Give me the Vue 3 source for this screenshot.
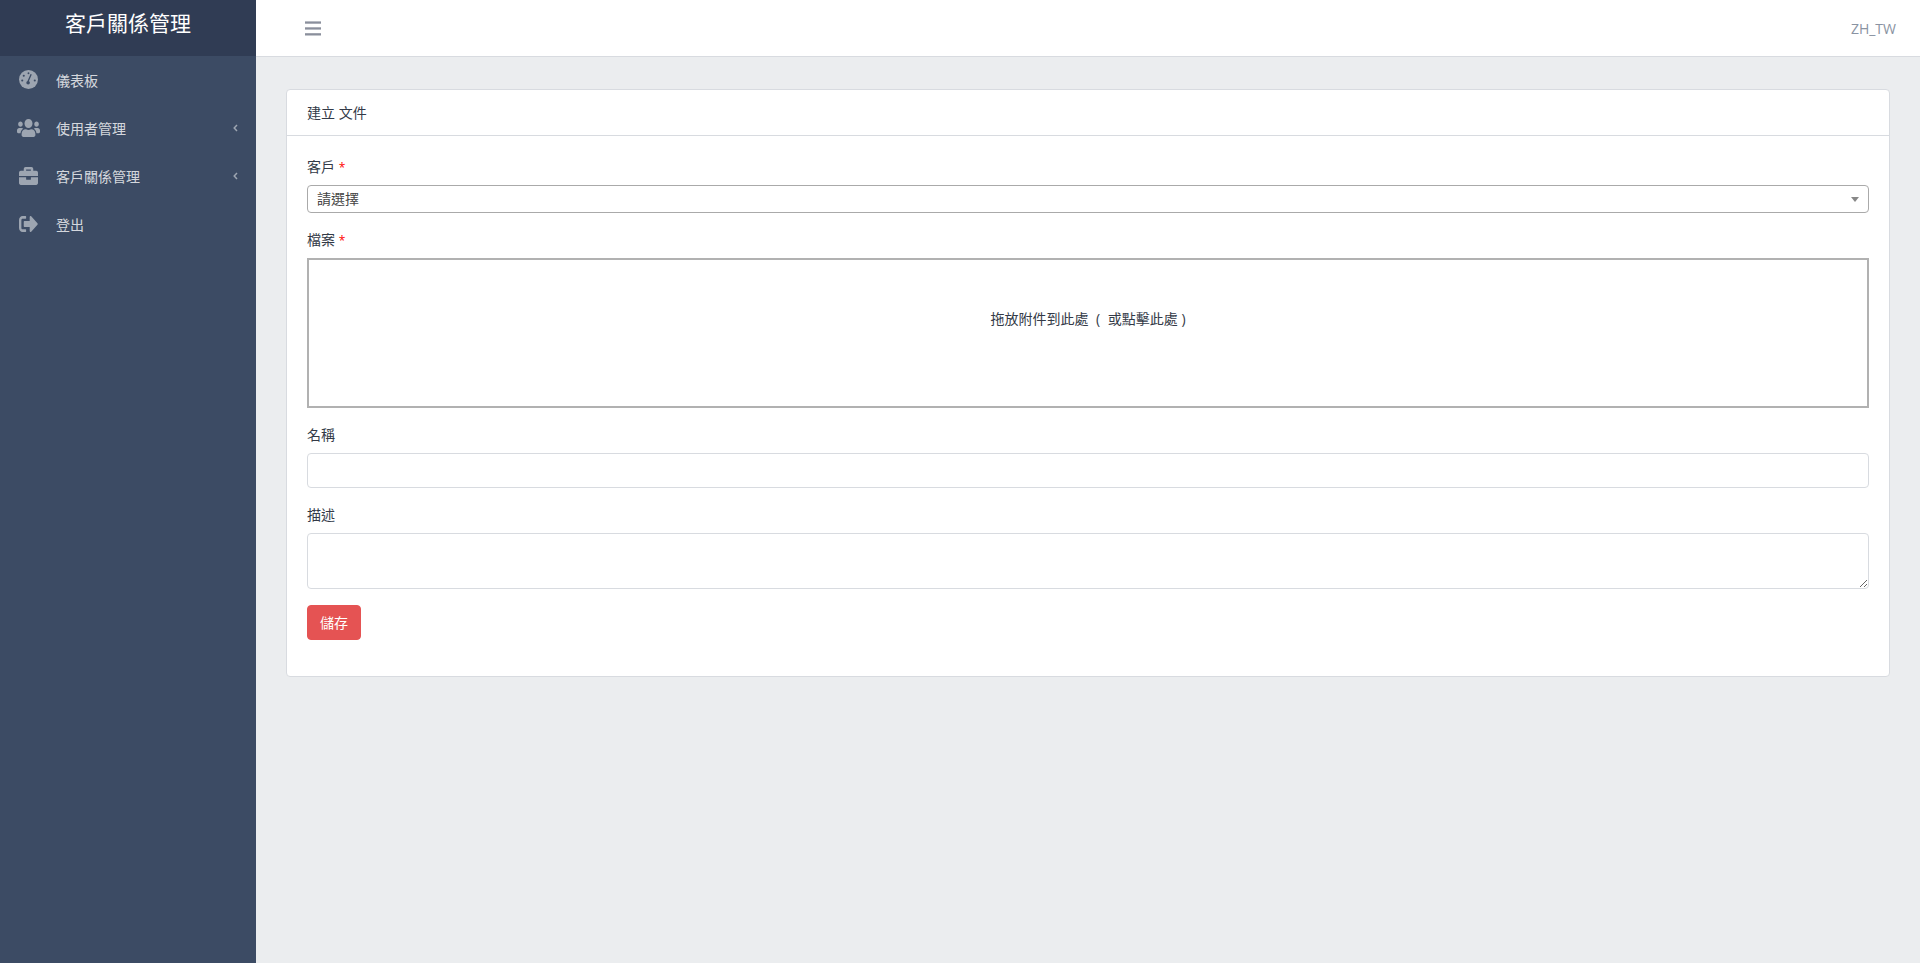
<script setup>
const nav = [
  { label: '儀表板', icon: 'gauge', vb: '0 0 20 20', w: 19, h: 19 },
  {
    label: '使用者管理', caret: true, vb: '0 32 640 448', w: 23, h: 18,
    d: 'M96 224c35.3 0 64-28.7 64-64s-28.7-64-64-64-64 28.7-64 64 28.7 64 64 64zm448 0c35.3 0 64-28.7 64-64s-28.7-64-64-64-64 28.7-64 64 28.7 64 64 64zm32 32h-64c-17.6 0-33.5 7.1-45.1 18.6 40.3 22.1 68.9 62 75.1 109.4h66c17.7 0 32-14.3 32-32v-32c0-35.3-28.7-64-64-64zm-256 0c61.9 0 112-50.1 112-112S381.9 32 320 32 208 82.1 208 144s50.1 112 112 112zm76.8 32h-8.3c-20.8 10-43.9 16-68.5 16s-47.6-6-68.5-16h-8.3C179.6 288 128 339.6 128 403.2V432c0 26.5 21.5 48 48 48h288c26.5 0 48-21.5 48-48v-28.8c0-63.6-51.6-115.2-115.2-115.2zm-223.7-13.4C161.5 263.1 145.6 256 128 256H64c-35.3 0-64 28.7-64 64v32c0 17.7 14.3 32 32 32h65.9c6.3-47.4 34.9-87.3 75.2-109.4z'
  },
  {
    label: '客戶關係管理', caret: true, vb: '0 32 512 448', w: 19, h: 18,
    d: 'M320 336c0 8.84-7.16 16-16 16h-96c-8.84 0-16-7.16-16-16v-48H0v144c0 25.6 22.4 48 48 48h416c25.6 0 48-22.4 48-48V288H320v48zm144-208h-80V80c0-25.6-22.4-48-48-48H176c-25.6 0-48 22.4-48 48v48H48c-25.6 0-48 22.4-48 48v80h512v-80c0-25.6-22.4-48-48-48zm-144 0H192V96h128v32z'
  },
  {
    label: '登出', vb: '0 64 512 384', w: 19, h: 16,
    d: 'M497 273L329 441c-15 15-41 4.5-41-17v-96H152c-13.3 0-24-10.7-24-24v-96c0-13.3 10.7-24 24-24h136V88c0-21.4 25.9-32 41-17l168 168c9.3 9.4 9.3 24.6 0 34zM192 436v-40c0-6.6-5.4-12-12-12H96c-17.7 0-32-14.3-32-32V160c0-17.7 14.3-32 32-32h84c6.6 0 12-5.4 12-12V76c0-6.6-5.4-12-12-12H96c-53 0-96 43-96 96v192c0 53 43 96 96 96h84c6.6 0 12-5.4 12-12z'
  }
]
</script>

<template>
  <div class="app" lang="zh-Hant">
    <aside class="sidebar">
      <div class="brand">客戶關係管理</div>
      <nav class="nav">
        <a v-for="item in nav" :key="item.label" class="nav-item">
          <span class="nav-icon">
            <svg :width="item.w" :height="item.h" :viewBox="item.vb" preserveAspectRatio="none">
              <template v-if="item.icon === 'gauge'">
                <circle cx="10" cy="10" r="10" fill="#9da5b1" />
                <circle cx="10" cy="3.4" r="1" fill="#3c4b64" />
                <circle cx="5" cy="6" r="1.1" fill="#3c4b64" />
                <circle cx="3.4" cy="11" r="1.1" fill="#3c4b64" />
                <circle cx="16.6" cy="11" r="1.1" fill="#3c4b64" />
                <path d="M9.4 12.4L12.8 4.4" stroke="#3c4b64" stroke-width="1.4" />
                <circle cx="9.6" cy="13.4" r="1.9" fill="#3c4b64" />
              </template>
              <path v-else :d="item.d" fill="#9da5b1" />
            </svg>
          </span>
          <span class="nav-label">{{ item.label }}</span>
          <svg v-if="item.caret" class="caret" width="5" height="8" viewBox="0 0 5 8">
            <path d="M4 1L1.2 4L4 7" fill="none" stroke="#9da5b1" stroke-width="1.5" />
          </svg>
        </a>
      </nav>
    </aside>

    <div class="main">
      <header class="topbar">
        <button class="burger" type="button" aria-label="menu">
          <svg width="16" height="15" viewBox="0 0 16 15">
            <rect x="0" y="0.4" width="16" height="2.3" fill="#8a8f9c" />
            <rect x="0" y="6.3" width="16" height="2.3" fill="#8a8f9c" />
            <rect x="0" y="12.2" width="16" height="2.3" fill="#8a8f9c" />
          </svg>
        </button>
        <span class="lang">ZH_TW</span>
      </header>

      <main class="content">
        <section class="card">
          <div class="card-header">建立 文件</div>
          <form class="card-body" @submit.prevent>
            <div class="group">
              <label class="label">客戶 <span class="req">*</span></label>
              <div class="select-wrap">
                <select class="select">
                  <option>請選擇</option>
                </select>
              </div>
            </div>
            <div class="group">
              <label class="label">檔案 <span class="req">*</span></label>
              <div class="dropzone">
                <div class="dz-message">拖放附件到此處<span class="paren"> ( </span>或點擊此處 )</div>
              </div>
            </div>
            <div class="group">
              <label class="label">名稱</label>
              <input class="control" type="text" />
            </div>
            <div class="group">
              <label class="label">描述</label>
              <textarea class="control area"></textarea>
            </div>
            <button class="save" type="submit">儲存</button>
          </form>
        </section>
      </main>
    </div>
  </div>
</template>

<style>
html, body { margin: 0; padding: 0; }
</style>

<style scoped>
.app {
  display: flex;
  min-height: 963px;
  height: 100vh;
  font-family: "Open Sans", "Noto Sans CJK TC", sans-serif;
  font-size: 14px;
  line-height: 21px;
  color: #333a47;
  background: #ebedef;
  overflow: hidden;
}
.sidebar {
  width: 256px;
  flex: none;
  background: #3c4b64;
}
.brand {
  height: 56px;
  background: #303c54;
  color: #fff;
  font-size: 21px;
  line-height: 47px;
  text-align: center;
}
.nav-item {
  display: flex;
  align-items: center;
  height: 48px;
  color: rgba(255, 255, 255, 0.8);
  padding-right: 18px;
}
.nav-icon {
  width: 56px;
  flex: none;
  display: flex;
  justify-content: center;
  box-sizing: border-box;
  padding-left: 1px;
  margin-bottom: 1px;
}
.nav-label {
  flex: 1;
}
.caret {
  flex: none;
  margin-bottom: 1px;
}
.main {
  flex: 1;
  min-width: 0;
  display: flex;
  flex-direction: column;
}
.topbar {
  height: 56px;
  flex: none;
  background: #fff;
  border-bottom: 1px solid #d8dbe0;
  display: flex;
  align-items: center;
  justify-content: space-between;
  padding: 0 24px 0 49px;
}
.burger {
  width: 16px;
  height: 15px;
  padding: 0;
  border: 0;
  background: none;
  display: block;
  line-height: 0;
  margin-top: 1px;
}
.lang {
  color: #8a93a2;
  font-size: 14px;
  margin-top: 1px;
}
.content {
  flex: 1;
  padding: 32px 30px;
}
.card {
  background: #fff;
  border: 1px solid #d8dbe0;
  border-radius: 4px;
}
.card-header {
  height: 45px;
  line-height: 45px;
  padding: 0 20px;
  border-bottom: 1px solid #d8dbe0;
}
.card-body {
  padding: 20px 20px 36px;
}
.group {
  margin-bottom: 16px;
}
.label {
  display: block;
  margin-bottom: 8px;
  height: 21px;
}
.req {
  color: #f00;
  font-size: 12px;
}
.select-wrap {
  position: relative;
}
.select-wrap::after {
  content: "";
  position: absolute;
  right: 10px;
  top: 12px;
  border-style: solid;
  border-width: 5px 4px 0;
  border-color: #888 transparent transparent;
  pointer-events: none;
}
.select {
  display: block;
  width: 100%;
  height: 28px;
  box-sizing: border-box;
  appearance: none;
  border: 1px solid #aaa;
  border-radius: 4px;
  background: #fff;
  color: #444;
  font: inherit;
  padding: 0 9px;
  line-height: 26px;
}
.dropzone {
  height: 150px;
  box-sizing: border-box;
  border: 2px solid #b1b1b1;
  padding: 20px;
  text-align: center;
}
.dz-message {
  margin: 28px 0;
}
.paren {
  word-spacing: 4px;
}
.control {
  display: block;
  width: 100%;
  height: 35px;
  box-sizing: border-box;
  border: 1px solid #d8dbe0;
  border-radius: 4px;
  background: #fff;
  font: inherit;
  padding: 6px 12px;
  outline: none;
}
.area {
  height: 56px;
  resize: vertical;
}
.save {
  display: block;
  width: 54px;
  height: 35px;
  padding: 0;
  border: 1px solid #e55353;
  border-radius: 4px;
  background: #e55353;
  color: #fff;
  font: inherit;
}
</style>
